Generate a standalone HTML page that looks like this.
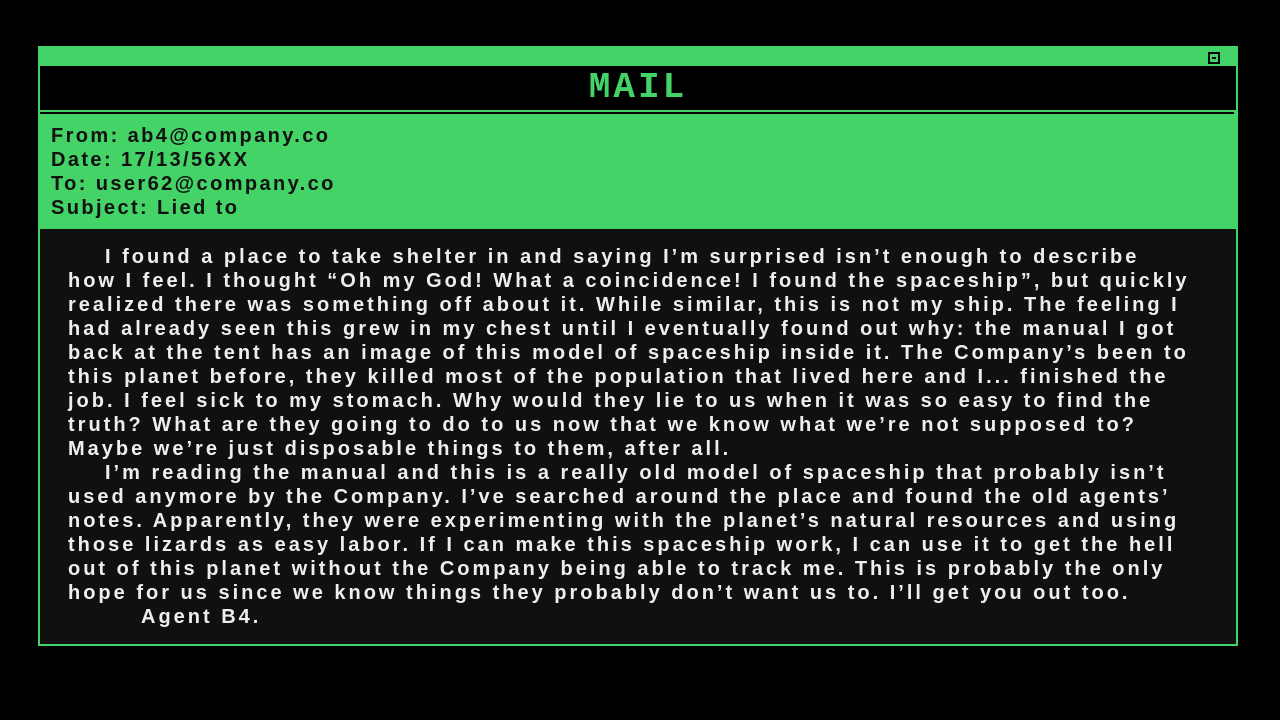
<!DOCTYPE html>
<html><head><style>
body{margin:0;width:1280px;height:720px;background:#000;overflow:hidden;font-family:"Liberation Sans",sans-serif;}
.win{position:absolute;left:38px;top:46px;width:1196px;height:596px;border:2px solid #44d366;background:#44d366;}
.btn{position:absolute;left:1168px;top:4px;width:8px;height:8px;border:2px solid #000;}
.btn:after{content:"";position:absolute;left:2px;top:3px;width:4px;height:2px;background:#000;}
.title{position:absolute;left:0;top:18px;width:1196px;height:44px;background:#000;color:#44d366;text-align:center;font:bold 36px/44px "Liberation Mono",monospace;letter-spacing:3px;}
.sep{position:absolute;left:0;top:64px;width:1194px;height:2px;background:#000;}
.hdr{position:absolute;left:11px;top:76px;color:#111;font-weight:bold;font-size:20px;line-height:24px;letter-spacing:2.4px;white-space:pre;}
.body{position:absolute;left:0;top:181px;width:1196px;height:415px;background:#101010;}
.txt{position:absolute;left:28px;top:16px;color:#eee;font-weight:bold;font-size:20px;line-height:24px;letter-spacing:3px;white-space:pre;}
.i{display:inline-block;width:37px}
.a{display:inline-block;width:73px}
</style></head><body>
<div class="win">
<div class="btn"></div>
<div class="title">MAIL</div>
<div class="sep"></div>
<div class="hdr">From: ab4@company.co
Date: 17/13/56XX
To: user62@company.co
Subject: Lied to</div>
<div class="body"><div class="txt"><span class="i"></span>I found a place to take shelter in and saying I’m surprised isn’t enough to describe
how I feel. I thought “Oh my God! What a coincidence! I found the spaceship”, but quickly
realized there was something off about it. While similar, this is not my ship. The feeling I
had already seen this grew in my chest until I eventually found out why: the manual I got
back at the tent has an image of this model of spaceship inside it. The Company’s been to
this planet before, they killed most of the population that lived here and I... finished the
job. I feel sick to my stomach. Why would they lie to us when it was so easy to find the
truth? What are they going to do to us now that we know what we’re not supposed to?
Maybe we’re just disposable things to them, after all.
<span class="i"></span>I’m reading the manual and this is a really old model of spaceship that probably isn’t
used anymore by the Company. I’ve searched around the place and found the old agents’
notes. Apparently, they were experimenting with the planet’s natural resources and using
those lizards as easy labor. If I can make this spaceship work, I can use it to get the hell
out of this planet without the Company being able to track me. This is probably the only
hope for us since we know things they probably don’t want us to. I’ll get you out too.
<span class="a"></span>Agent B4.</div></div>
</div>
</body></html>
